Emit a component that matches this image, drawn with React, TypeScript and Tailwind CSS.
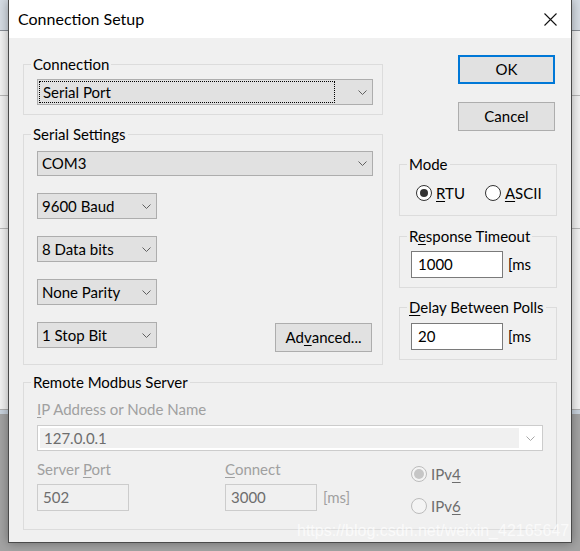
import React from "react";

const ui = { fontFamily: "Lato, 'Open Sans', sans-serif" };

function Chevron({ color = "#606060" }: { color?: string }) {
  return (
    <svg width="9" height="5" viewBox="0 0 9 5" className="shrink-0">
      <path d="M0.5 0.5 L4.5 4.5 L8.5 0.5" fill="none" stroke={color} strokeWidth="1" />
    </svg>
  );
}

// Win32-style group box: legend cuts into the top border
function Group({
  label,
  className = "",
  body = "",
  children,
}: {
  label: React.ReactNode;
  className?: string;
  body?: string;
  children: React.ReactNode;
}) {
  return (
    <fieldset className={`border border-[#dcdcdc] ${className}`}>
      <legend className="ml-[7px] px-[2px] text-[15px] leading-[18px] text-black whitespace-nowrap">
        {label}
      </legend>
      <div className={body}>{children}</div>
    </fieldset>
  );
}

function Combo({
  value,
  width,
  height = "h-[26px]",
  focus = false,
}: {
  value: string;
  width: string;
  height?: string;
  focus?: boolean;
}) {
  return (
    <div
      className={`${width} ${height} flex items-center border border-[#adadad] bg-[#e1e1e1] pr-[5px]`}
    >
      <div className="flex-1 h-full p-[1px]">
        <div
          className={`h-full flex items-center pl-[3px] text-[15px] text-black ${
            focus ? "border border-dotted border-black mr-[22px]" : ""
          }`}
        >
          {value}
        </div>
      </div>
      <Chevron />
    </div>
  );
}

function Button({ children, focused = false }: { children: React.ReactNode; focused?: boolean }) {
  return (
    <div
      className={`w-[97px] h-[29px] flex items-center justify-center bg-[#e1e1e1] text-[15px] text-black ${
        focused ? "border-2 border-[#0078d7]" : "border border-[#adadad]"
      }`}
    >
      {children}
    </div>
  );
}

function Radio({
  checked,
  disabled = false,
  children,
}: {
  checked: boolean;
  disabled?: boolean;
  children: React.ReactNode;
}) {
  return (
    <div className="flex items-center gap-[4px] h-[20px]">
      <div
        className={`w-[16px] h-[16px] rounded-full border flex items-center justify-center ${
          disabled ? "border-[#bcbcbc] bg-[#f4f4f4]" : "border-[#333333] bg-white"
        }`}
      >
        {checked && (
          <div
            className={`rounded-full ${
              disabled ? "w-[10px] h-[10px] bg-[#c6c6c6]" : "w-[8px] h-[8px] bg-[#333333]"
            }`}
          />
        )}
      </div>
      <span className={`text-[15px] ${disabled ? "text-[#6d6d6d]" : "text-black"}`}>{children}</span>
    </div>
  );
}

function MsField({ value }: { value: string }) {
  return (
    <div className="flex items-center gap-[5px]">
      <div className="w-[92px] h-[27px] border border-[#7a7a7a] bg-white flex items-center pl-[6px] text-[15px] text-black">
        {value}
      </div>
      <span className="text-[15px] text-black">[ms</span>
    </div>
  );
}

function ConnectionSetup() {
  return (
    <div className="absolute left-[8px] top-0 w-[564px] h-[543px] border-x border-b border-[#4a4a4a] bg-[#f0f0f0] shadow-[0_0_10px_rgba(0,0,0,0.35)] flex flex-col">
      {/* title bar */}
      <div className="h-[38px] bg-white flex items-center pl-[9px] pr-[14px]">
        <span className="text-[16px] text-black flex-1">Connection Setup</span>
        <svg width="13" height="13" viewBox="0 0 13 13">
          <path d="M0.5 0.5 L12.5 12.5 M12.5 0.5 L0.5 12.5" stroke="#111" strokeWidth="1.1" />
        </svg>
      </div>

      <div className="flex flex-col pl-[14px] pr-[14px]">
        <div className="flex gap-[16px]">
          {/* left column */}
          <div className="w-[360px] flex flex-col">
            <Group label="Connection" className="mt-[17px]" body="pl-[13px] pr-[9px] pt-[6px] pb-[9px]">
              <Combo value="Serial Port" width="w-[336px]" focus />
            </Group>

            <Group label="Serial Settings" className="mt-[10px]" body="pl-[13px] pr-[9px] pt-[8px] pb-[12px]">
              <Combo value="COM3" width="w-[336px]" height="h-[25px]" />
              <div className="mt-[17px]">
                <Combo value="9600 Baud" width="w-[120px]" />
              </div>
              <div className="mt-[17px]">
                <Combo value="8 Data bits" width="w-[120px]" />
              </div>
              <div className="mt-[17px]">
                <Combo value="None Parity" width="w-[120px]" />
              </div>
              <div className="mt-[17px] flex items-start justify-between">
                <Combo value="1 Stop Bit" width="w-[120px]" />
                <div className="mt-[1px] mr-[1px]">
                  <Button>
                    Ad<u className="underline-offset-2">v</u>anced...
                  </Button>
                </div>
              </div>
            </Group>
          </div>

          {/* right column */}
          <div className="w-[158px] flex flex-col">
            <div className="mt-[17px] ml-[59px] flex flex-col gap-[18px]">
              <Button focused>OK</Button>
              <Button>Cancel</Button>
            </div>

            <Group label="Mode" className="mt-[24px]" body="pl-[16px] pt-[10px] pb-[12px]">
              <div className="flex gap-[20px]">
                <Radio checked>
                  <u className="underline-offset-2">R</u>TU
                </Radio>
                <Radio checked={false}>
                  <u className="underline-offset-2">A</u>SCII
                </Radio>
              </div>
            </Group>

            <Group
              label={
                <>
                  R<u className="underline-offset-2">e</u>sponse Timeout
                </>
              }
              className="mt-[11px]"
              body="pl-[11px] pt-[6px] pb-[9px]"
            >
              <MsField value="1000" />
            </Group>

            <Group
              label={
                <>
                  <u className="underline-offset-2">D</u>elay Between Polls
                </>
              }
              className="mt-[10px]"
              body="pl-[11px] pt-[7px] pb-[9px]"
            >
              <MsField value="20" />
            </Group>
          </div>
        </div>

        {/* remote server, disabled in serial mode */}
        <Group label="Remote Modbus Server" className="mt-[8px]" body="pl-[13px] pr-[13px] pt-[9px] pb-[13px]">
          <div className="text-[15px] leading-[18px] text-[#a0a0a0]">
            <u className="underline-offset-2">I</u>P Address or Node Name
          </div>
          <div className="mt-[7px] h-[26px] border border-[#cccccc] bg-white flex">
            <div className="flex-1 m-[2px] mr-0 bg-[#f0f0f0] flex items-center pl-[4px] text-[15px] text-[#6d6d6d]">
              127.0.0.1
            </div>
            <div className="w-[23px] flex items-center justify-center">
              <Chevron color="#a8a8a8" />
            </div>
          </div>
          <div className="mt-[9px] flex">
            <div className="w-[188px] flex flex-col">
              <div className="text-[15px] leading-[18px] text-[#a0a0a0]">
                Server <u className="underline-offset-2">P</u>ort
              </div>
              <div className="mt-[6px] w-[92px] h-[27px] border border-[#cccccc] bg-[#f0f0f0] flex items-center pl-[5px] text-[15px] text-[#6d6d6d]">
                502
              </div>
            </div>
            <div className="w-[186px] flex flex-col">
              <div className="text-[15px] leading-[18px] text-[#a0a0a0]">
                <u className="underline-offset-2">C</u>onnect
              </div>
              <div className="mt-[6px] flex items-center gap-[6px]">
                <div className="w-[92px] h-[27px] border border-[#cccccc] bg-[#f0f0f0] flex items-center pl-[5px] text-[15px] text-[#6d6d6d]">
                  3000
                </div>
                <span className="w-[31px] overflow-hidden whitespace-nowrap text-[15px] text-[#a0a0a0]">[ms]</span>
              </div>
            </div>
            <div className="flex flex-col gap-[12px] mt-[4px]">
              <Radio checked disabled>
                IPv<u className="underline-offset-2">4</u>
              </Radio>
              <Radio checked={false} disabled>
                IPv<u className="underline-offset-2">6</u>
              </Radio>
            </div>
          </div>
        </Group>
      </div>
    </div>
  );
}

export default function App() {
  return (
    <div className="relative w-[580px] h-[551px] overflow-hidden flex flex-col" style={ui}>
      {/* desktop behind the dialog */}
      <div className="h-[30px] bg-[#d5dce4]" />
      <div className="h-[1px] bg-[#8a8f96]" />
      <div className="h-[64px] bg-[#f3f3f3]" />
      <div className="h-[1px] bg-[#b8b8b8]" />
      <div className="h-[132px] bg-[#f3f3f3]" />
      <div className="h-[1px] bg-[#b8b8b8]" />
      <div className="h-[180px] bg-[#f3f3f3]" />
      <div className="h-[1px] bg-[#b0b0b0]" />
      <div className="h-[4px] bg-[#c9d3de]" />
      <div className="flex-1 bg-[#a3a3a3]" />

      <ConnectionSetup />

      <div
        className="absolute left-[297px] top-[519px] text-[16px] text-white/70 whitespace-nowrap pointer-events-none"
        style={{ fontFamily: "'Liberation Sans', Arial, sans-serif" }}
      >
        https://blog.csdn.net/weixin_42165647
      </div>
    </div>
  );
}
